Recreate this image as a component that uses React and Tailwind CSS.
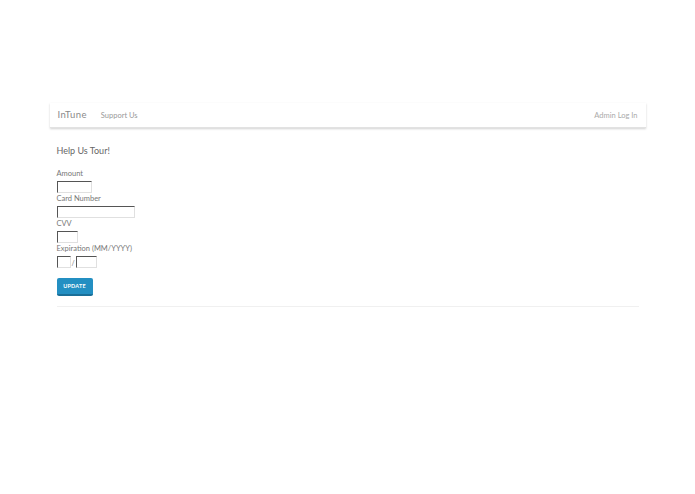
export default function App() {
  const field = 'block h-[12px] bg-white border-[1.5px] border-t-[#555] border-l-[#555] border-b-[#e0e0e0] border-r-[#e0e0e0]'
  const label = 'text-[7.5px] text-[#777] leading-[10px]'
  return (
    <div className="w-[695px] h-[494px] bg-white pt-[103px]" style={{ fontFamily: 'Lato, "Liberation Sans", sans-serif' }}>
      <div className="mx-auto w-[596px]">
        {/* Navbar */}
        <div className="h-[25px] flex items-center bg-white shadow-[0_1px_2px_rgba(0,0,0,0.18)] border-b border-[#e2e2e2] px-[8px]">
          <span className="text-[9.5px] text-[#8a8a8a] tracking-[0.4px] pt-[1px]">InTune</span>
          <span className="text-[7.5px] text-[#999] ml-[14px] pt-[1px]">Support Us</span>
          <span className="text-[7.5px] text-[#aaa] ml-auto pt-[1px]">Admin Log In</span>
        </div>

        {/* Form */}
        <div className="px-[7px] pt-[17px]">
          <div className="text-[9px] text-[#666] leading-[12px]">Help Us Tour!</div>
          <div className={`mt-[12px] ${label}`}>Amount</div>
          <input className={`${field} mt-[2px] w-[35px]`} />
          <div className={`mt-[1px] ${label}`}>Card Number</div>
          <input className={`${field} mt-[2px] w-[78px]`} />
          <div className={`mt-[1px] ${label}`}>CVV</div>
          <input className={`${field} mt-[2px] w-[21px]`} />
          <div className={`mt-[1px] ${label}`}>Expiration (MM/YYYY)</div>
          <div className="mt-[2px] flex items-end">
            <input className={`${field} w-[14px]`} />
            <span className="text-[7px] text-[#777] leading-[10px] mx-[1px]">/</span>
            <input className={`${field} w-[21px]`} />
          </div>
          <button className="mt-[10px] w-[36px] h-[18px] rounded-[2px] bg-[#238fc2] border-b-[2px] border-[#1a6f98] text-white text-[5.5px] font-bold tracking-[0.2px] flex items-center justify-center">
            UPDATE
          </button>
          <div className="mt-[10px] h-px bg-[#f0f0f0] w-[582px]" />
        </div>
      </div>
    </div>
  )
}
